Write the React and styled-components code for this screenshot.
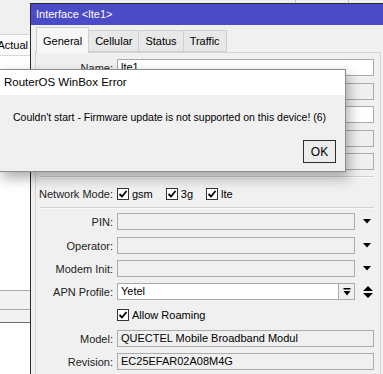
import React from 'react';
import styled, { createGlobalStyle } from 'styled-components';

const GlobalStyle = createGlobalStyle`
  html, body {
    margin: 0;
    padding: 0;
    background: #fff;
  }
  body {
    font-family: "Liberation Sans", Arial, sans-serif;
    font-size: 11px;
    color: #000;
  }
`;

//DESKTOP
const Desktop = styled.div`
  position: relative;
  width: 383px;
  height: 374px;
  overflow: hidden;
  background: #fff;
`;

//BACK WINDOW (list behind the interface window)
const BackWindow = styled.div`
  position: absolute;
  left: 0;
  top: 0;
  width: 383px;
  height: 374px;
  display: flex;
  flex-direction: column;
  background: #fff;
`;
const BackToolbar = styled.div`
  height: 34px;
  display: flex;
  background: #f0f0f0;
`;
const ToolbarCell = styled.div`
  width: ${p => p.$w}px;
  border-right: 1px solid #c4c4c4;
`;
const BackHeader = styled.div`
  height: 20px;
  display: flex;
  border-top: 1px solid #d8d8d8;
  border-bottom: 1px solid #d8d8d8;
  background: #fafafa;
`;
const HeaderCell = styled.div`
  width: 28px;
  display: flex;
  justify-content: flex-end;
  align-items: center;
  overflow: hidden;
  white-space: nowrap;
  padding-right: 2px;
  border-right: 1px solid #d0d0d0;
`;
const BackSpacer = styled.div`
  height: ${p => p.$h}px;
`;
const ListRow = styled.div`
  height: ${p => p.$h}px;
  background: #f2f2f2;
  border-top: 1px solid ${p => p.$line};
`;
const ListEnd = styled.div`
  flex: 1;
  border-top: 1px solid #6e6e6e;
  background: #fff;
`;

//INTERFACE WINDOW
const Window = styled.div`
  position: absolute;
  left: 30px;
  top: 3px;
  width: 362px;
  height: 380px;
  box-sizing: border-box;
  border-left: 1px solid #2a2a2a;
  border-top: 1px solid #2a2a2a;
  background: #f0f0f0;
  display: flex;
  flex-direction: column;
`;
const TitleBar = styled.div`
  height: 21px;
  line-height: 21px;
  padding-left: 5px;
  background: #4b4bc7;
  color: #fff;
  font-size: 11px;
`;
const TabBar = styled.div`
  display: flex;
  align-items: flex-end;
  height: 25px;
  padding: 2px 0 0 5px;
  position: relative;
  z-index: 1;
`;
const Tab = styled.div`
  height: ${p => (p.$active ? 26 : 22)}px;
  margin-bottom: ${p => (p.$active ? -1 : 0)}px;
  box-sizing: border-box;
  padding: 0 6px;
  display: flex;
  align-items: center;
  border: 1px solid #cfcfcf;
  border-bottom: ${p => (p.$active ? 'none' : '1px solid #cfcfcf')};
  margin-left: ${p => (p.$first ? 0 : -1)}px;
  background: ${p => (p.$active ? '#f6f6f6' : '#e8e8e8')};
  font-size: 11px;
`;
const Panel = styled.div`
  width: 346px;
  margin-left: 4px;
  box-sizing: border-box;
  border: 1px solid #d4d4d4;
  border-bottom: none;
  padding: 0 6px 0 0;
  flex: 1;
  background: #f0f0f0;
`;
const Row = styled.div`
  margin-top: ${p => p.$mt}px;
  height: ${p => p.$h || 17}px;
  display: grid;
  grid-template-columns: 77px 1fr;
  column-gap: 4px;
  align-items: center;
`;
const Label = styled.div`
  text-align: right;
  white-space: nowrap;
  color: #222;
`;
const FieldLine = styled.div`
  display: flex;
  align-items: center;
  height: 17px;
`;
const Field = styled.div`
  flex: 1;
  height: 17px;
  box-sizing: border-box;
  border: 1px solid #ababab;
  background: ${p => (p.$white ? '#fff' : '#f0f0f0')};
  padding: 0 3px;
  line-height: 15px;
  white-space: nowrap;
  overflow: hidden;
`;
const SideSlot = styled.div`
  width: 19px;
  height: 17px;
  display: flex;
  align-items: center;
  padding-left: 8px;
  box-sizing: border-box;
`;
const PickButton = styled.div`
  width: 16px;
  height: 17px;
  box-sizing: border-box;
  border: 1px solid #ababab;
  border-left: none;
  background: #f0f0f0;
  display: flex;
  align-items: center;
  justify-content: center;
`;
const Divider = styled.div`
  margin: ${p => p.$mt}px 0 0 4px;
  height: 1px;
  background: #cfcfcf;
  border-bottom: 1px solid #fafafa;
`;
const CheckGroup = styled.div`
  display: flex;
  align-items: center;
  gap: 13px;
`;
const CheckItem = styled.label`
  display: flex;
  align-items: center;
  gap: 3px;
  white-space: nowrap;
`;
const Box = styled.span`
  width: 12px;
  height: 12px;
  box-sizing: border-box;
  border: 1px solid #333;
  background: #fff;
  display: flex;
  align-items: center;
  justify-content: center;
`;

//ERROR DIALOG
const Dialog = styled.div`
  position: absolute;
  left: -1px;
  top: 69px;
  width: 347px;
  box-sizing: border-box;
  border: 1px solid #8c8c8c;
  background: #f0f0f0;
  box-shadow: 3px 6px 12px rgba(0, 0, 0, 0.32);
  display: flex;
  flex-direction: column;
`;
const DialogTitle = styled.div`
  height: 25px;
  line-height: 25px;
  padding-left: 4px;
  background: #fff;
  font-size: 11.5px;
`;
const DialogBody = styled.div`
  padding: 15px 9px 8px 13px;
`;
const Message = styled.div`
  font-size: 10.5px;
  line-height: 14px;
  white-space: nowrap;
`;
const ButtonRow = styled.div`
  display: flex;
  justify-content: flex-end;
  margin-top: 16px;
`;
const OkButton = styled.div`
  width: 33px;
  height: 23px;
  box-sizing: border-box;
  border: 1px solid #2d2d2d;
  background: #ececec;
  display: flex;
  align-items: center;
  justify-content: center;
  font-size: 12px;
`;

const DownArrow = () => (
  <svg width="8" height="5" viewBox="0 0 8 5">
    <path d="M0 0H8L4 4.5Z" fill="#000" />
  </svg>
);

const UpDown = () => (
  <svg width="10" height="12" viewBox="0 0 10 12">
    <path d="M0 5L5 0L10 5Z M0 7H10L5 12Z" fill="#000" />
  </svg>
);

const PickIcon = () => (
  <svg width="8" height="8" viewBox="0 0 8 8">
    <rect x="0.5" y="0" width="7" height="1.5" fill="#000" />
    <path d="M0.5 3H7.5L4 7.5Z" fill="#000" />
  </svg>
);

const Check = ({ label }) => (
  <CheckItem>
    <Box>
      <svg width="10" height="10" viewBox="0 0 10 10">
        <path d="M1.5 5L4 7.5L8.5 2" fill="none" stroke="#000" strokeWidth="1.8" />
      </svg>
    </Box>
    {label}
  </CheckItem>
);

const TextRow = ({ label, value, white, mt, arrow }) => (
  <Row $mt={mt}>
    <Label>{label}</Label>
    <FieldLine>
      <Field $white={white}>{value}</Field>
      {arrow && <SideSlot><DownArrow /></SideSlot>}
    </FieldLine>
  </Row>
);

const App = () => {
  return (
    <Desktop>
      <GlobalStyle />
      <BackWindow>
        <BackToolbar>
          <ToolbarCell $w={295} />
          <ToolbarCell $w={52} />
        </BackToolbar>
        <BackHeader>
          <HeaderCell>Actual</HeaderCell>
        </BackHeader>
        <BackSpacer $h={234} />
        <ListRow $h={18} $line="#a8a8a8" />
        <ListRow $h={12} $line="#a8a8a8" />
        <ListEnd />
      </BackWindow>

      <Window>
        <TitleBar>Interface &lt;lte1&gt;</TitleBar>
        <TabBar>
          <Tab $active $first>General</Tab>
          <Tab>Cellular</Tab>
          <Tab>Status</Tab>
          <Tab>Traffic</Tab>
        </TabBar>
        <Panel>
          {/* rows 2-5 lie under the error dialog: only their field ends show */}
          <TextRow label="Name:" value="lte1" white mt={6} />
          <TextRow mt={7} />
          <TextRow white mt={6} />
          <TextRow mt={7} />
          <TextRow mt={6} />
          <Divider $mt={6} />
          <Row $mt={7}>
            <Label>Network Mode:</Label>
            <CheckGroup>
              <Check label="gsm" />
              <Check label="3g" />
              <Check label="lte" />
            </CheckGroup>
          </Row>
          <Divider $mt={5} />
          <TextRow label="PIN:" value="" mt={4} arrow />
          <TextRow label="Operator:" value="" mt={7} arrow />
          <TextRow label="Modem Init:" value="" mt={6} arrow />
          <Row $mt={6}>
            <Label>APN Profile:</Label>
            <FieldLine>
              <Field $white>Yetel</Field>
              <PickButton><PickIcon /></PickButton>
              <SideSlot><UpDown /></SideSlot>
            </FieldLine>
          </Row>
          <Row $mt={6} $h={18}>
            <span />
            <Check label="Allow Roaming" />
          </Row>
          <TextRow label="Model:" value="QUECTEL Mobile Broadband Modul" mt={6} />
          <TextRow label="Revision:" value="EC25EFAR02A08M4G" mt={6} />
        </Panel>
      </Window>

      <Dialog>
        <DialogTitle>RouterOS WinBox Error</DialogTitle>
        <DialogBody>
          <Message>Couldn't start - Firmware update is not supported on this device! (6)</Message>
          <ButtonRow>
            <OkButton>OK</OkButton>
          </ButtonRow>
        </DialogBody>
      </Dialog>
    </Desktop>
  );
};

export default App;
